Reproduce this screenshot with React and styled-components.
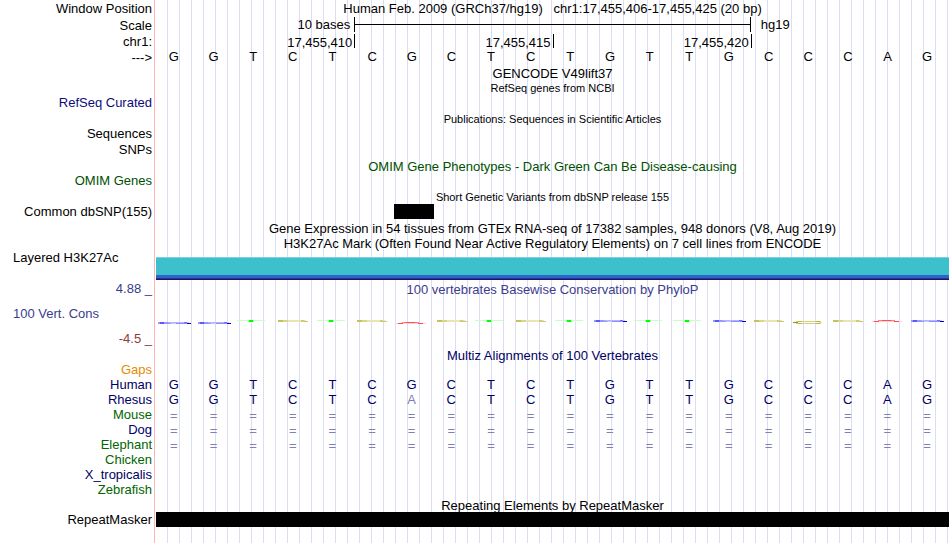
import React from 'react';
import styled, { createGlobalStyle } from 'styled-components';

const GlobalStyle = createGlobalStyle`
  * {
    box-sizing: border-box;
  }

  body {
    margin: 0;
    background-color: #ffffff;
    font-family: 'Liberation Sans', Arial, sans-serif;
    font-size: 13px;
    color: #000000;
  }
`;

const COLORS = {
  black: '#000000',
  refSeq: '#0c0c78',
  omim: '#005000',
  cons: '#3c3c8c',
  consLow: '#8c3c3c',
  gaps: '#e68c00',
  navy: '#000064',
  green: '#006400',
  faded: '#8080b2',
};

// Guide lines every 12px, hidden behind the label column
const Browser = styled.main`
  min-height: 100vh;
  padding-right: 1px;
  white-space: pre;
  background-image: linear-gradient(#ffb4b4, #ffb4b4),
    linear-gradient(#ffffff, #ffffff),
    linear-gradient(to right, #dcdcf5 1px, transparent 1px);
  background-size: 1px 100%, 156px 100%, 12px 100%;
  background-position: 154px 0, 0 0, 11px 0;
  background-repeat: no-repeat, no-repeat, repeat-x;
`;

const Row = styled.section`
  display: grid;
  grid-template-columns: 156px 1fr;
  height: ${(props) => props.$height || 15}px;
  line-height: ${(props) => props.$line || props.$height || 15}px;
`;

const Label = styled.div`
  padding: 0 4px 0 13px;
  text-align: ${(props) => (props.$left ? 'left' : 'right')};
  color: ${(props) => props.$color || COLORS.black};
`;

const Title = styled.div`
  grid-column: 2;
  padding-top: ${(props) => (props.$low ? 1 : 0)}px;
  text-align: center;
  font-size: ${(props) => (props.$small ? 11 : 13)}px;
  color: ${(props) => props.$color || COLORS.black};
`;

const Bases = styled.div`
  display: grid;
  grid-column: 2;
  grid-template-columns: repeat(20, minmax(0, 1fr));
`;

const Base = styled.span`
  padding-right: 4px;
  line-height: 14px;
  text-align: center;
`;

const Span = styled.div`
  grid-column: ${(props) => props.$from} / ${(props) => props.$to};
  padding: 0 4px 0 10px;
  line-height: 15px;
  text-align: ${(props) => (props.$right ? 'right' : 'left')};
`;

const Tick = styled(Span)`
  height: 14px;
  padding-right: 2px;
  line-height: 18px;
  border-left: ${(props) => (props.$from > 1 ? '1px solid #000000' : 'none')};
`;

const ScaleBar = styled.div`
  display: flex;
  align-items: center;
  grid-column: 6 / 16;
  height: 15px;
  border: solid #000000;
  border-width: 0 1px;

  &::before {
    content: '';
    flex: 1;
    height: 1px;
    background-color: #000000;
  }
`;

const Block = styled.div`
  grid-column: ${(props) => props.$from} / ${(props) => props.$to};
  height: 15px;
  background-color: #000000;
`;

const Signal = styled.div`
  height: 23px;
  margin-top: 6px;
  background-color: #3cc0cc;
  border-top: 1px solid #78d2e6;
  border-bottom: 1px solid #281450;
  box-shadow: inset 0 -1px #1e32b4, inset 0 -4px #2d64c8;
`;

const Logo = styled.svg`
  display: block;
  width: 36px;
  height: 34px;
`;

const Alignment = styled.table`
  width: 100%;
  table-layout: fixed;
  border-collapse: collapse;
  line-height: 15px;
`;

const Species = styled.th`
  width: 156px;
  height: 15px;
  padding: 0 4px 0 0;
  text-align: right;
  font-weight: 400;
  color: ${(props) => props.$color};
`;

const AlignedBase = styled.td`
  height: 15px;
  padding: ${(props) => (props.$gap ? '2px 4px 0 0' : '0 4px 0 0')};
  line-height: ${(props) => (props.$gap ? 13 : 15)}px;
  text-align: center;
  color: ${(props) => (props.$faded ? COLORS.faded : COLORS.navy)};
`;

// -----------------------------------------
const sequence = 'GGTCTCGCTCTGTTGCCCAG'.split('');
const matches = '='.repeat(20);

const species = [
  { name: 'Gaps', color: COLORS.gaps, bases: '' },
  { name: 'Human', color: COLORS.navy, bases: 'GGTCTCGCTCTGTTGCCCAG' },
  { name: 'Rhesus', color: COLORS.navy, bases: 'GGTCTCACTCTGTTGCCCAG' },
  { name: 'Mouse', color: COLORS.green, bases: matches },
  { name: 'Dog', color: COLORS.navy, bases: matches },
  { name: 'Elephant', color: COLORS.green, bases: matches },
  { name: 'Chicken', color: COLORS.green, bases: '' },
  { name: 'X_tropicalis', color: COLORS.navy, bases: '' },
  { name: 'Zebrafish', color: COLORS.green, bases: '' },
];

// Conservation score below zero pushes the letter under the axis
const conservation = [
  'G-', 'G-', 'T', 'C', 'T', 'C', 'A-', 'C', 'T', 'C',
  'T', 'G', 'T', 'T', 'G', 'C', 'C-', 'C', 'A', 'G',
];

// [x, y, width, height, color]
const letterG = [
  [3, 0, 30, 2, '#c8c8ff'],
  [2, 0, 3, 2, '#9696ff'],
  [4, 0, 4, 2, '#5a5aff'],
  [8, 0, 7, 2, '#9696ff'],
  [12, 0, 17, 1, '#b4b4ff'],
  [20, 1, 11, 1, '#8c8cff'],
  [28, 0, 3, 1, '#6e6eff'],
  [31, 1, 4, 1, '#0000c8'],
];

const letterA = [
  [2, 1, 30, 1, '#ffd2d2'],
  [4, 1, 5, 1, '#ff5050'],
  [8, 0, 17, 1, '#ff8282'],
  [12, 0, 9, 1, '#ff5050'],
  [24, 1, 5, 1, '#ff5050'],
];

const shapes = {
  G: letterG,
  'G-': letterG,
  A: letterA,
  'A-': letterA,
  C: [
    [3, 0, 28, 2, '#e6e6b4'],
    [3, 0, 5, 2, '#c3c35a'],
    [8, 0, 5, 2, '#d7d78c'],
    [26, 0, 3, 2, '#cdcd78'],
    [29, 1, 4, 1, '#c8c86e'],
  ],
  'C-': [
    [6, -1, 25, 1, '#d2d27d'],
    [8, -1, 4, 1, '#b9b946'],
    [26, -1, 4, 1, '#b9b946'],
    [3, 0, 5, 1, '#96960a'],
    [29, 0, 3, 1, '#e1e1a0'],
    [6, 1, 25, 1, '#d2d27d'],
    [8, 1, 4, 1, '#b9b946'],
    [26, 1, 4, 1, '#b9b946'],
  ],
  T: [
    [2, 0, 28, 1, '#c8ffc8'],
    [13, 0, 6, 2, '#96ff96'],
    [14, 0, 4, 2, '#00ff00'],
  ],
};

function ConservationLogo({ letter }) {
  const top = letter.endsWith('-') ? 25 : 23;

  return (
    <Logo viewBox="0 0 36 34" shapeRendering="crispEdges" aria-hidden="true">
      {shapes[letter].map(([x, y, width, height, fill], i) => (
        <rect key={i} x={x} y={top + y} width={width} height={height} fill={fill} />
      ))}
    </Logo>
  );
}

export default function App() {
  return (
    <>
      <GlobalStyle />
      <Browser>
        {/* Position and ruler */}
        <Row $height={17}>
          <Label>Window Position</Label>
          <Title>
            {'Human Feb. 2009 (GRCh37/hg19)   chr1:17,455,406-17,455,425 (20 bp)'}
          </Title>
        </Row>
        <Row $height={17}>
          <Label>Scale</Label>
          <Bases>
            <Span $from={1} $to={6} $right>
              10 bases
            </Span>
            <ScaleBar />
            <Span $from={16} $to={21}>
              hg19
            </Span>
          </Bases>
        </Row>
        <Row $height={16}>
          <Label>chr1:</Label>
          <Bases>
            <Tick $from={1} $to={6} $right>
              17,455,410
            </Tick>
            <Tick $from={6} $to={11} $right>
              17,455,415
            </Tick>
            <Tick $from={11} $to={16} $right>
              17,455,420
            </Tick>
            <Tick $from={16} $to={21} />
          </Bases>
        </Row>
        <Row $height={16}>
          <Label>{'--->'}</Label>
          <Bases>
            {sequence.map((base, i) => (
              <Base key={i}>{base}</Base>
            ))}
          </Bases>
        </Row>

        {/* Genes */}
        <Row>
          <Title>GENCODE V49lift37</Title>
        </Row>
        <Row>
          <Title $small>RefSeq genes from NCBI</Title>
        </Row>
        <Row $line={13}>
          <Label $color={COLORS.refSeq}>RefSeq Curated</Label>
        </Row>
        <Row>
          <Title $small $low>
            Publications: Sequences in Scientific Articles
          </Title>
        </Row>
        <Row $height={16} $line={15}>
          <Label>Sequences</Label>
        </Row>
        <Row $height={16}>
          <Label>SNPs</Label>
        </Row>
        <Row $height={16}>
          <Title $low $color={COLORS.omim}>
            OMIM Gene Phenotypes - Dark Green Can Be Disease-causing
          </Title>
        </Row>
        <Row $line={13}>
          <Label $color={COLORS.omim}>OMIM Genes</Label>
        </Row>

        {/* Variants */}
        <Row>
          <Title $small $low>
            Short Genetic Variants from dbSNP release 155
          </Title>
        </Row>
        <Row>
          <Label>Common dbSNP(155)</Label>
          <Bases>
            <Block $from={7} $to={8} />
          </Bases>
        </Row>

        {/* Expression and regulation */}
        <Row $height={17}>
          <Title $low>
            Gene Expression in 54 tissues from GTEx RNA-seq of 17382 samples, 948
            {' donors (V8, Aug 2019)'}
          </Title>
        </Row>
        <Row>
          <Title>
            H3K27Ac Mark (Often Found Near Active Regulatory Elements) on 7 cell
            {' lines from ENCODE'}
          </Title>
        </Row>
        <Row $height={30} $line={13}>
          <Label $left>Layered H3K27Ac</Label>
          <Signal />
        </Row>

        {/* Conservation */}
        <Row $height={16}>
          <Label $color={COLORS.cons}>4.88 _</Label>
          <Title $low $color={COLORS.cons}>
            100 vertebrates Basewise Conservation by PhyloP
          </Title>
        </Row>
        <Row $height={34}>
          <Label $left $color={COLORS.cons}>
            100 Vert. Cons
          </Label>
          <Bases>
            {conservation.map((letter, i) => (
              <ConservationLogo key={i} letter={letter} />
            ))}
          </Bases>
        </Row>
        <Row $height={16}>
          <Label $color={COLORS.consLow}>-4.5 _</Label>
        </Row>

        {/* Alignment */}
        <Row>
          <Title $low $color={COLORS.navy}>
            Multiz Alignments of 100 Vertebrates
          </Title>
        </Row>
        <Alignment>
          <tbody>
            {species.map(({ name, color, bases }) => (
              <tr key={name}>
                <Species scope="row" $color={color}>
                  {name}
                </Species>
                {sequence.map((base, i) => (
                  <AlignedBase
                    key={i}
                    $faded={bases[i] !== base}
                    $gap={bases === matches}
                  >
                    {bases[i]}
                  </AlignedBase>
                ))}
              </tr>
            ))}
          </tbody>
        </Alignment>

        {/* Repeats */}
        <Row>
          <Title $low>Repeating Elements by RepeatMasker</Title>
        </Row>
        <Row>
          <Label>RepeatMasker</Label>
          <Bases>
            <Block $from={1} $to={21} />
          </Bases>
        </Row>
      </Browser>
    </>
  );
}
